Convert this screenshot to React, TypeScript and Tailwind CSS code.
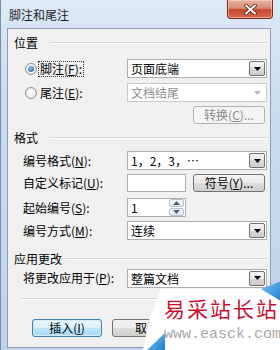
import React from 'react';

const Acc = ({ k }: { k: string }) => (
    <>
        (<span className="underline underline-offset-[1px]">{k}</span>)
    </>
);

function Arrow({ color, up = false }: { color: string; up?: boolean }) {
    return (
        <svg width="7" height="4" viewBox="0 0 7 4">
            <path d={up ? 'M0 4h7L3.5 0z' : 'M0 0h7L3.5 4z'} fill={color} />
        </svg>
    );
}

function Combo({ text, disabled = false }: { text: React.ReactNode; disabled?: boolean }) {
    return (
        <div
            className={`flex h-[19px] flex-1 items-center border bg-white ${
                disabled ? 'border-[#c9c9c9] text-[#8f8f8f]' : 'border-[#abadb3] text-black'
            }`}>
            <span className="flex-1 truncate pl-[3px] leading-[17px]">{text}</span>
            <span
                className={`mr-px flex h-[15px] w-[16px] items-center justify-center rounded-[2px] border ${
                    disabled
                        ? 'border-transparent'
                        : 'border-[#707070] bg-[linear-gradient(#f4f4f4,#e6e6e6_50%,#d8d8d8_50%,#cdcdcd)]'
                }`}>
                <Arrow color={disabled ? '#b8b8b8' : '#000'} />
            </span>
        </div>
    );
}

function Btn({
    children,
    className = '',
    disabled = false,
    primary = false,
}: {
    children: React.ReactNode;
    className?: string;
    disabled?: boolean;
    primary?: boolean;
}) {
    let look = 'border-[#707070] bg-[linear-gradient(#f3f3f3,#ebebeb_50%,#dddddd_50%,#cfcfcf)] text-black';
    if (disabled) look = 'border-[#adb2b5] bg-[#f4f4f4] text-[#8a8a8a]';
    if (primary)
        look =
            'border-[#3c7fb1] bg-[linear-gradient(#eaf6fd,#d9f0fc_50%,#bee6fd_50%,#a7d9f5)] text-black shadow-[inset_0_0_0_1px_#d6ecf9]';
    return (
        <div
            className={`flex h-[18px] items-center justify-center rounded-[3px] border leading-[16px] ${look} ${className}`}>
            {children}
        </div>
    );
}

function Radio({ checked }: { checked: boolean }) {
    return (
        <span className="flex h-[12px] w-[12px] items-center justify-center rounded-full border border-[#8e8f8f] bg-[radial-gradient(circle_at_40%_35%,#ffffff,#e2e2e2)]">
            {checked && (
                <span className="h-[6px] w-[6px] rounded-full bg-[radial-gradient(circle_at_40%_35%,#8fc4f0,#1c5691)]" />
            )}
        </span>
    );
}

function Group({ title, className = '' }: { title: string; className?: string }) {
    return (
        <div className={`flex h-[16px] items-center ${className}`}>
            <span className="min-w-[33px] leading-[16px]">{title}</span>
            <span className="ml-[3px] h-[2px] flex-1 border-t border-b border-t-[#d5d5d5] border-b-white" />
        </div>
    );
}

function Row({
    label,
    children,
    className = '',
}: {
    label: React.ReactNode;
    children: React.ReactNode;
    className?: string;
}) {
    return (
        <div className={`flex items-center ${className}`}>
            <div className="w-[113px] shrink-0 pl-[9px] leading-[16px]">{label}</div>
            {children}
        </div>
    );
}

// site watermark pasted over the bottom-right corner
function Watermark() {
    return (
        <div className="absolute left-[140px] top-[280px] h-[70px] w-[140px]">
            <svg className="absolute inset-0" width="140" height="70" viewBox="0 0 140 70">
                <defs>
                    <linearGradient id="wmBlue" x1="0" y1="0" x2="1" y2="1">
                        <stop offset="0" stopColor="#7cc3ef" />
                        <stop offset="1" stopColor="#1f7fcf" />
                    </linearGradient>
                </defs>
                <polygon points="20,9 140,9 140,70 2,70 8,40" fill="#ffffff" />
                <polygon points="120,9 140,1 140,21" fill="url(#wmBlue)" />
                <polygon points="6,70 24,53 24,70" fill="url(#wmBlue)" />
            </svg>
            <span className="absolute left-[23px] top-[16px] whitespace-nowrap text-[21px] leading-[24px] tracking-[2px] text-[#c8102e]">
                易采站长站
            </span>
            <span className="absolute left-[23px] top-[47px] whitespace-nowrap font-['Liberation_Mono',monospace] text-[15px] leading-[16px] text-[#a8a8a8]">
                www.easck.com
            </span>
        </div>
    );
}

export default function App() {
    return (
        <div className="relative h-[350px] w-[280px] overflow-hidden border-l border-[#7b8da3] bg-[linear-gradient(#dde9f6,#c9dcf0_30%,#bfd4ec)] font-['Noto_Sans_CJK_SC',sans-serif] text-[12px] text-black">
            {/* title bar */}
            <div className="flex h-[28px] items-start justify-between">
                <span className="ml-[8px] mt-[7px] text-[12px] leading-[15px] text-[#1c1c1c]">脚注和尾注</span>
                <div className="mr-[7px] flex h-[19px] w-[46px] items-center justify-center rounded-b-[4px] border border-t-0 border-[#7a2e22] bg-[linear-gradient(#eab3a3,#d98a75_45%,#c4452f_55%,#d86a4c)] shadow-[inset_0_0_0_1px_rgba(255,220,210,0.5)]">
                    <svg width="13" height="11" viewBox="0 0 13 11">
                        <path d="M2 1.5l9 8M11 1.5l-9 8" stroke="#4a1b14" strokeWidth="3.6" strokeLinecap="round" />
                        <path d="M2 1.5l9 8M11 1.5l-9 8" stroke="#ffffff" strokeWidth="2" strokeLinecap="round" />
                    </svg>
                </div>
            </div>

            {/* client area */}
            <div className="ml-[6px] mr-[9px] flex h-[320px] flex-col border border-[#8d9db0] bg-[#f0f0f0] pl-[6px] pr-[3px]">
                <Group title="位置" className="mt-[6px]" />
                <div className="mt-[8px] flex h-[19px] items-center">
                    <div className="flex w-[113px] shrink-0 items-center pl-[11px]">
                        <Radio checked />
                        <span className="ml-px border border-dotted border-[#333] px-px leading-[14px]">
                            脚注<Acc k="F" />:
                        </span>
                    </div>
                    <Combo text="页面底端" />
                </div>
                <div className="mt-[5px] flex h-[19px] items-center">
                    <div className="flex w-[113px] shrink-0 items-center pl-[11px]">
                        <Radio checked={false} />
                        <span className="ml-[2px] px-px leading-[14px]">
                            尾注<Acc k="E" />:
                        </span>
                    </div>
                    <Combo text="文档结尾" disabled />
                </div>
                <div className="mt-[4px] flex justify-end pr-[2px]">
                    <Btn disabled className="w-[72px]">
                        转换<Acc k="C" />...
                    </Btn>
                </div>

                <Group title="格式" className="mt-[6px]" />
                <Row className="mt-[5px] h-[19px]" label={<>编号格式<Acc k="N" />:</>}>
                    <Combo text="1，2，3，…" />
                </Row>
                <Row className="mt-[4px] h-[18px]" label={<>自定义标记<Acc k="U" />:</>}>
                    <div className="h-[18px] w-[59px] border border-[#abadb3] bg-white" />
                    <Btn className="ml-auto mr-[2px] w-[72px]">
                        符号<Acc k="Y" />...
                    </Btn>
                </Row>
                <Row className="mt-[6px] h-[19px]" label={<>起始编号<Acc k="S" />:</>}>
                    <div className="flex h-[19px] w-[59px] items-center border border-[#abadb3] bg-white">
                        <span className="flex-1 pl-[3px] leading-[17px]">1</span>
                        <div className="mr-px flex h-[17px] w-[15px] flex-col gap-px">
                            <span className="flex flex-1 items-center justify-center rounded-[2px] border border-[#b4c2d2] bg-[linear-gradient(#f4f8fc,#dde7f2)]">
                                <Arrow color="#4d6178" up />
                            </span>
                            <span className="flex flex-1 items-center justify-center rounded-[2px] border border-[#b4c2d2] bg-[linear-gradient(#f4f8fc,#dde7f2)]">
                                <Arrow color="#4d6178" />
                            </span>
                        </div>
                    </div>
                </Row>
                <Row className="mt-[4px] h-[19px]" label={<>编号方式<Acc k="M" />:</>}>
                    <Combo text="连续" />
                </Row>

                <Group title="应用更改" className="mt-[11px]" />
                <Row className="mt-px h-[20px]" label={<>将更改应用于<Acc k="P" />:</>}>
                    <Combo text="整篇文档" />
                </Row>

                <div className="ml-[6px] mt-[10px] h-[2px] border-t border-b border-t-[#d5d5d5] border-b-white" />

                <div className="ml-[18px] mt-[19px] flex gap-[10px]">
                    <Btn primary className="w-[70px]">
                        插入<Acc k="I" />
                    </Btn>
                    <Btn className="w-[70px]">取消</Btn>
                </div>
            </div>

            <Watermark />
        </div>
    );
}
